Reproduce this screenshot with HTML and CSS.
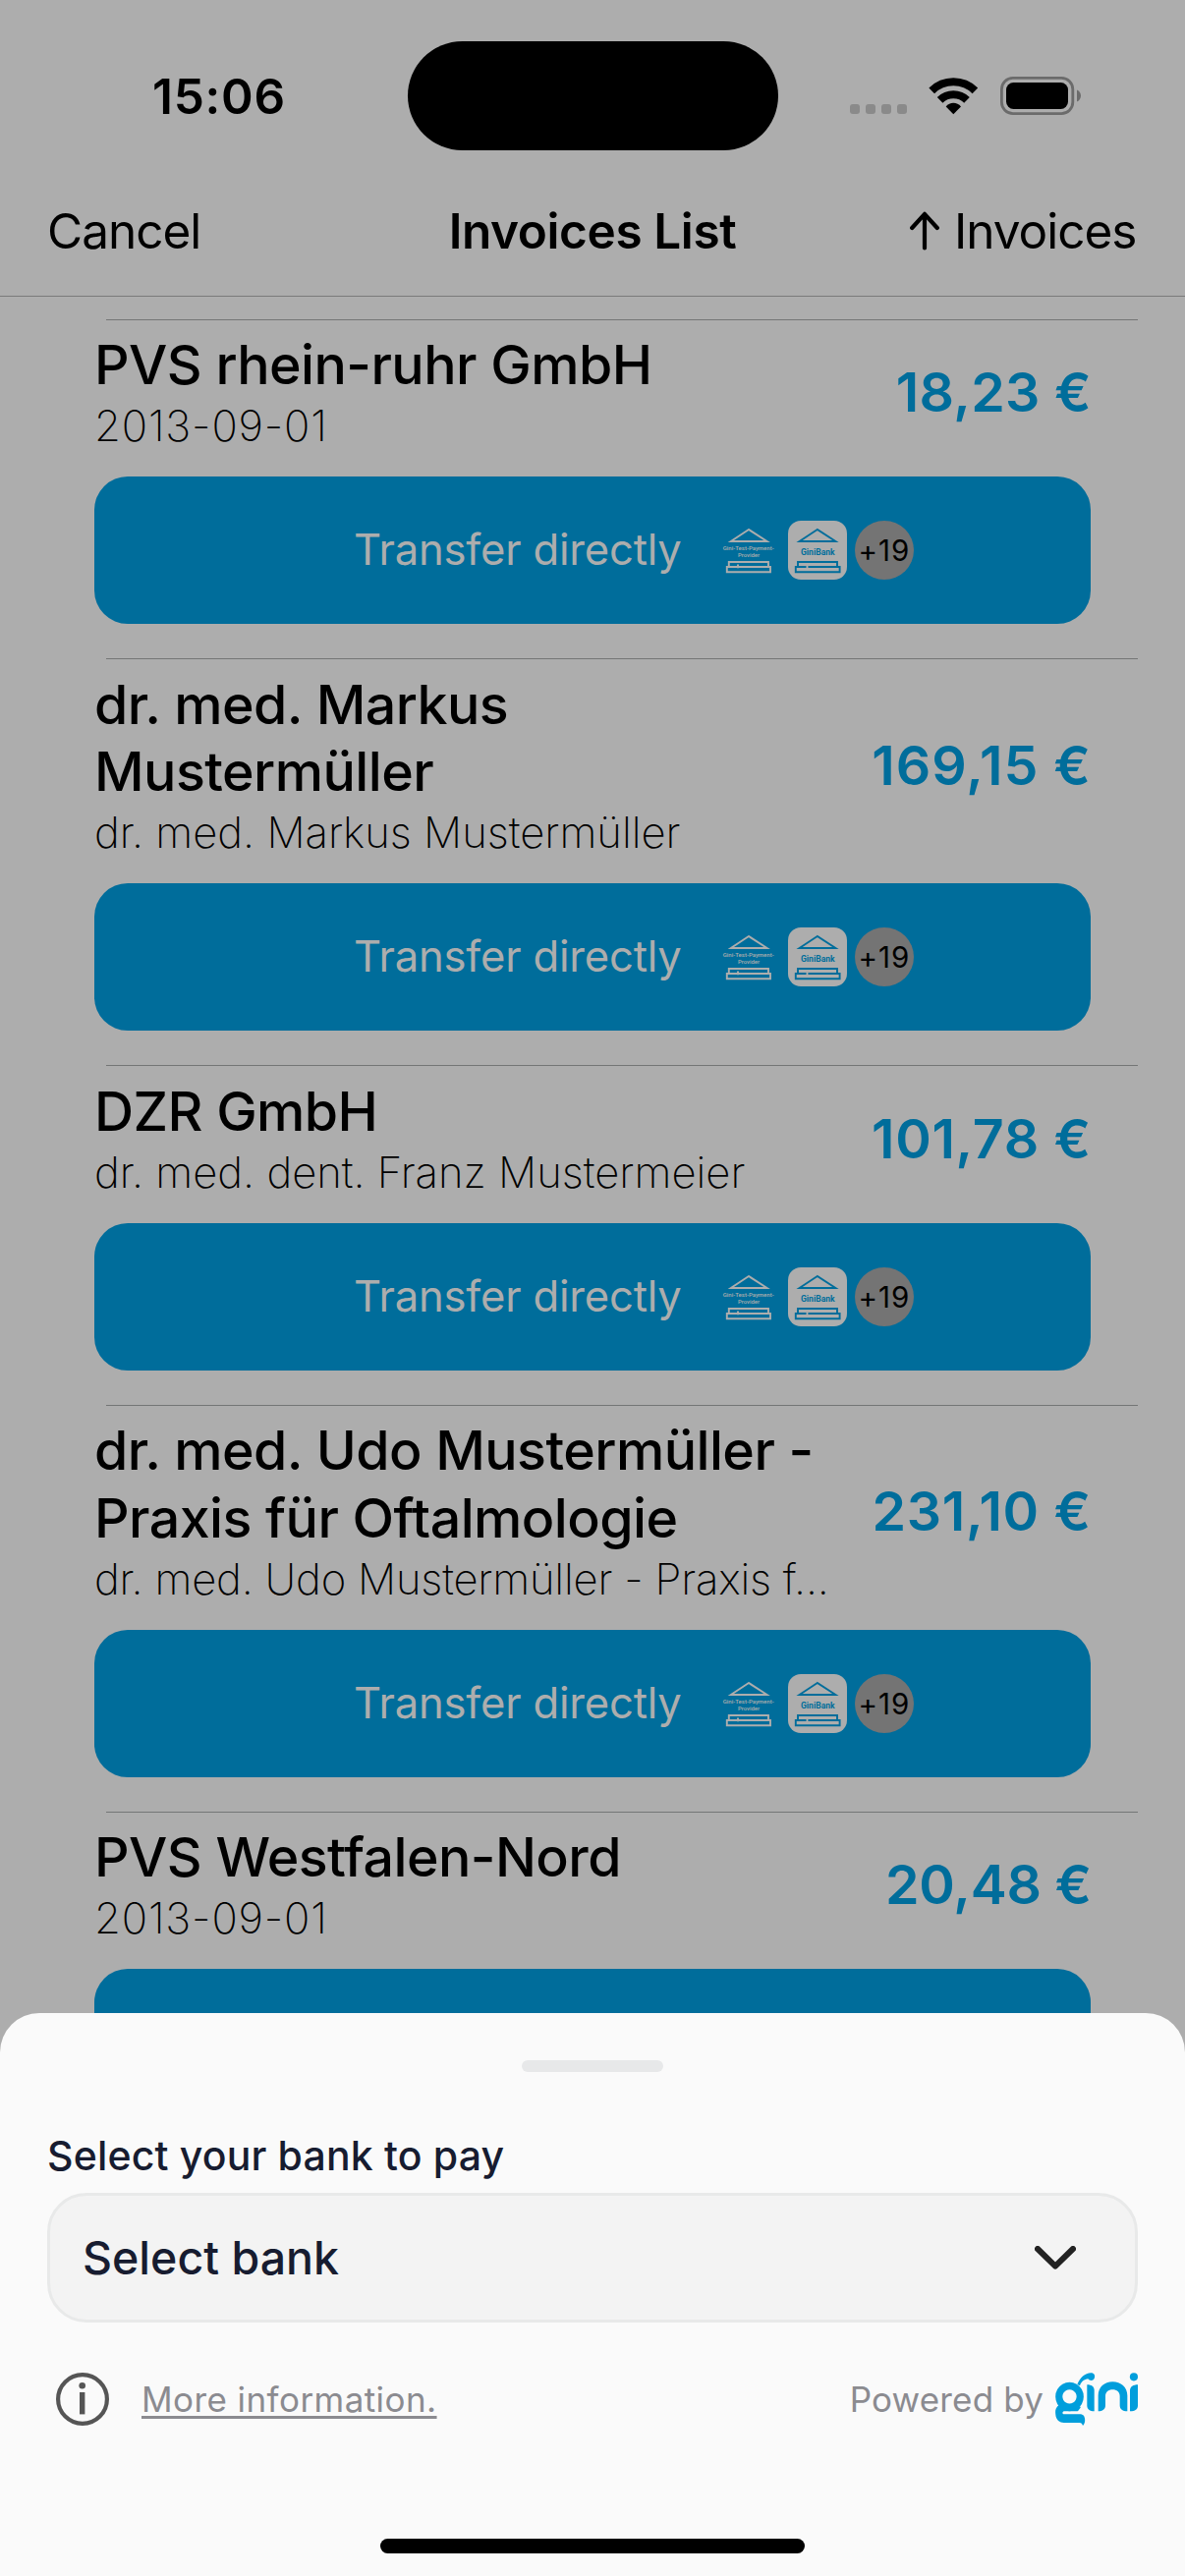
FILE: index.html
```html
<!DOCTYPE html>
<html lang="en">
<head>
<meta charset="utf-8">
<title>Invoices List</title>
<link rel="stylesheet" href="styles.css">
</head>
<body>
<svg class="defs" width="0" height="0" aria-hidden="true">
  <symbol id="bank-test" viewBox="0 0 60 60">
    <g fill="none" stroke="#adadad" stroke-width="1.9">
      <path d="M29 9 10.8 21H47.6Z"/>
      <path d="M8.8 46.4V42H49v4.4"/>
      <path d="M6.8 47h44.200v5.200H6.800Z"/>
      <path d="M18 44.6v3.6"/>
    </g>
    <text x="2.7" y="30" textLength="52" lengthAdjust="spacingAndGlyphs" class="bank-tiny">Gini-Test-Payment-</text>
    <text x="18" y="37.2" textLength="22" lengthAdjust="spacingAndGlyphs" class="bank-tiny">Provider</text>
  </symbol>
  <symbol id="bank-gini" viewBox="0 0 60 60">
    <rect width="60" height="60" rx="13" fill="#adadad"/>
    <g fill="none" stroke="#006d9b" stroke-width="1.9">
      <path d="M29.8 9 11.600 21H48.400Z"/>
      <path d="M10 46.4V42h40v4.4"/>
      <path d="M7.8 47h44.800v5.200H7.800Z"/>
      <path d="M19.5 43.500v5" stroke="#adadad"/>
    </g>
    <text x="13" y="35" textLength="34.6" lengthAdjust="spacingAndGlyphs" class="bank-name">GiniBank</text>
  </symbol>
</svg>

<main class="screen">
  <header class="status">
    <span class="time">15:06</span>
    <span class="island"></span>
    <span class="indicators">
      <svg width="58" height="39" viewBox="0 0 58 39" fill="#8a8a8a"><rect y="28" width="10" height="10" rx="3"/><rect x="16" y="28" width="10" height="10" rx="3"/><rect x="32" y="28" width="10" height="10" rx="3"/><rect x="48" y="28" width="10" height="10" rx="3"/></svg>
      <svg width="51" height="39" viewBox="0 -1 51 39"><g fill="none" stroke="#000" stroke-width="8"><path d="M3.2 13.4A31.5 31.5 0 0 1 47.4 13.4"/><path d="M11.6 22.8A19.5 19.5 0 0 1 39 22.8"/></g><path d="M17.7 29.5C21.5 24.6 29.1 24.6 33 29.5L25.3 37.3Z"/></svg>
      <svg width="83" height="39" viewBox="0 0 83 39"><rect x="1.4" y="1.4" width="72.4" height="36.2" rx="11.5" fill="none" stroke="#6b6b6b" stroke-width="2.8"/><rect x="6" y="6" width="63" height="27" rx="7.5"/><path d="M78 13.5C80.6 14.6 82 17 82 19.5S80.6 24.4 78 25.5Z" fill="#6b6b6b"/></svg>
    </span>
  </header>

  <nav class="nav">
    <span class="nav-left">Cancel</span>
    <span class="nav-title">Invoices List</span>
    <span class="nav-right"><svg width="30" height="40" viewBox="0 0 30 40" fill="none" stroke="#000" stroke-width="4.2" stroke-linecap="round" stroke-linejoin="round"><path d="M15 37.4V3M2.2 17 15 2.8 27.8 17"/></svg><span>Invoices</span></span>
  </nav>

  <section class="list">
    <article class="invoice">
      <div class="info"><div><h2>PVS rhein-ruhr GmbH</h2><p class="date">2013-09-01</p></div><strong>18,23 €</strong></div>
      <div class="pay"><span>Transfer directly</span><svg><use href="#bank-test"/></svg><svg><use href="#bank-gini"/></svg><b>+19</b></div>
    </article>
    <article class="invoice">
      <div class="info"><div><h2>dr. med. Markus<br>Mustermüller</h2><p>dr. med. Markus Mustermüller</p></div><strong class="loose">169,15 €</strong></div>
      <div class="pay"><span>Transfer directly</span><svg><use href="#bank-test"/></svg><svg><use href="#bank-gini"/></svg><b>+19</b></div>
    </article>
    <article class="invoice">
      <div class="info"><div><h2>DZR GmbH</h2><p>dr. med. dent. Franz Mustermeier</p></div><strong class="wide">101,78 €</strong></div>
      <div class="pay"><span>Transfer directly</span><svg><use href="#bank-test"/></svg><svg><use href="#bank-gini"/></svg><b>+19</b></div>
    </article>
    <article class="invoice">
      <div class="info"><div><h2>dr. med. Udo Mustermüller -<br>Praxis für Oftalmologie</h2><p class="clipped">dr. med. Udo Mustermüller - Praxis f...</p></div><strong class="wide">231,10 €</strong></div>
      <div class="pay"><span>Transfer directly</span><svg><use href="#bank-test"/></svg><svg><use href="#bank-gini"/></svg><b>+19</b></div>
    </article>
    <article class="invoice">
      <div class="info"><div><h2>PVS Westfalen-Nord</h2><p class="date">2013-09-01</p></div><strong class="tight">20,48 €</strong></div>
      <div class="pay"></div>
    </article>
  </section>

  <section class="sheet">
    <div class="handle"></div>
    <div class="label">Select your bank to pay</div>
    <div class="select"><span>Select bank</span><svg width="42" height="24" viewBox="0 0 42 24" fill="none" stroke="#222" stroke-width="6" stroke-linecap="round" stroke-linejoin="round"><path d="M3 3 21 20.6 39 3"/></svg></div>
    <footer class="foot">
      <svg width="54" height="54" viewBox="0 0 54 54"><circle cx="27" cy="27" r="24.9" fill="none" stroke="#555" stroke-width="4.2"/><circle cx="26.7" cy="13.2" r="3.3" fill="#555"/><path d="M24 20h5.4v22.4H24Z" fill="#555"/></svg>
      <a class="more">More information.</a>
      <span class="powered">Powered by</span>
      <svg width="84" height="54" viewBox="72 76 252 162" fill="#009edc"><path fill-rule="evenodd" d="M115.5 105a43 44.5 0 1 0 .1 0ZM115.5 127.5a21.5 21.500 0 1 1-.1 0Z"/><path d="M84 174C70 184 72 196 73 205C74 220 86 229 98 229H146C152 229 154 233 156 238C161 233 162.5 228 162.5 221C162.5 209 157 203 147 203H99C93 202 92 197 98 194H140C144 190 147 186 150 180H90Z"/><path d="M139 112C148 92 162 77 181 77C190 77 194 84 192 91C190 101 178 103 172 95C161 96 151 104 147 116Z"/><path d="M169 113C183 113 191 119 191 131V194C177 194 169 188 169 176Z"/><path d="M203 194V146C203 120 222 104 247 104C272 104 292 120 292 146V194C278 194 269 188 269 176V148C269 136 260 128 247 128C234 128 225 136 225 148V176C225 188 216 194 203 194Z"/><path d="M324 113V176C324 188 316 194 300 194V131C300 119 310 113 324 113Z"/><circle cx="311.800" cy="89" r="12.2"/></svg>
    </footer>
    <div class="home"></div>
  </section>
</main>
</body>
</html>
```
FILE: styles.css
```css
* { box-sizing: border-box; }

body {
  margin: 0;
  background: #adadad;
  color: #000;
  font-family: Inter, "Liberation Sans", sans-serif;
}

.defs { position: absolute; }
svg { display: block; flex: none; }

.screen {
  position: relative;
  width: 1206px;
  height: 2622px;
  overflow: hidden;
  display: flex;
  flex-direction: column;
}

/* Status bar */
.status {
  flex: none;
  height: 194px;
  display: grid;
  grid-template-columns: 414.5px 377px 1fr;
  align-items: center;
}
.time {
  padding: 2px 0 0 155px;
  font-size: 49.5px;
  font-weight: 600;
  line-height: 60px;
  letter-spacing: 0.75px;
}
.island { height: 111px; border-radius: 56px; background: #000; }
.indicators { display: flex; padding-left: 73.5px; padding-top: 1px; }
.indicators svg:nth-child(2) { margin: 0 22px; }

/* Navigation bar */
.nav {
  flex: none;
  height: 108px;
  padding: 11px 48px 0;
  display: grid;
  grid-template-columns: 1fr auto 1fr;
  border-bottom: 1px solid #7a7a7a;
  font-size: 49.5px;
  line-height: 60px;
  letter-spacing: -1px;
}
.nav-title { font-weight: 600; letter-spacing: -0.4px; }
.nav-right { display: flex; justify-content: flex-end; gap: 15px; padding-right: 1.5px; }
.nav-right svg { margin-top: 10px; }

/* Invoice list */
.list { flex: 1; min-height: 0; overflow: hidden; padding-top: 23px; }
.invoice { padding: 0 96px 34.9px; }
.invoice::before {
  content: "";
  display: block;
  height: 1px;
  margin: 0 -48px 11.4px 12px;
  background: #747676;
}
.info { display: flex; justify-content: space-between; align-items: center; }
h2 {
  margin: 0;
  font-size: 55.5px;
  font-weight: 500;
  line-height: 68.5px;
  letter-spacing: -0.55px;
}
.info p {
  margin: 1.6px 0 0;
  font-size: 43.6px;
  font-weight: 200;
  line-height: 54px;
  letter-spacing: 0;
}
.info .date { letter-spacing: 0.85px; }
.info .clipped { letter-spacing: -0.2px; }
.info strong {
  margin-right: -1px;
  font-size: 55.5px;
  font-weight: 600;
  line-height: 68px;
  letter-spacing: 0.3px;
  color: #006d9b;
}
.info strong.loose { letter-spacing: 1px; }
.info strong.wide { letter-spacing: 0.7px; }
.info strong.tight { letter-spacing: -0.2px; }
.pay {
  margin-top: 24px;
  height: 150px;
  padding-left: 264px;
  display: flex;
  align-items: center;
  gap: 8.5px;
  border-radius: 34px;
  background: #006d9b;
  color: #adadad;
}
.pay span { width: 364.5px; font-size: 43.6px; letter-spacing: -0.2px; padding-bottom: 1px; }
.pay svg { width: 60px; height: 60px; }
.pay b {
  width: 60px;
  height: 60px;
  border-radius: 50%;
  background: #747474;
  color: #000;
  font-size: 29.5px;
  font-weight: 400;
  line-height: 60px;
  letter-spacing: 1px;
  text-align: center;
}
.bank-tiny { font: 500 6px Roboto, sans-serif; fill: #adadad; }
.bank-name { font: 700 8.6px Roboto, sans-serif; fill: #006d9b; }

/* Bottom sheet, laid over the list */
.sheet {
  position: absolute;
  left: 0;
  right: 0;
  bottom: 0;
  height: 573px;
  padding: 48px 48px 0;
  border-radius: 40px 40px 0 0;
  background: #fafafa;
  color: #171c30;
}
.handle { width: 144px; height: 12px; margin: 0 auto 60px; border-radius: 6px; background: #e7e8e9; }
.label { font-size: 41px; font-weight: 500; line-height: 50px; letter-spacing: 0.17px; }
.select {
  height: 132px;
  margin-top: 13px;
  padding: 0 60px 0 33px;
  display: flex;
  align-items: center;
  justify-content: space-between;
  border: 3px solid #e8e9e9;
  border-radius: 40px;
  background: #f3f3f3;
  font-size: 46.5px;
  font-weight: 500;
  line-height: 56px;
}
.foot {
  margin-top: 51px;
  padding-left: 9px;
  height: 54px;
  display: flex;
  align-items: center;
  color: #8b8b90;
  font-size: 35px;
  line-height: 42px;
}
.more {
  margin-left: 33px;
  letter-spacing: 0.43px;
  text-decoration: underline;
  text-decoration-thickness: 3px;
  text-decoration-skip-ink: none;
  text-underline-offset: 4px;
}
.powered { margin-left: auto; margin-right: 12px; letter-spacing: 0.17px; }
.home { width: 432px; height: 15px; margin: 115px auto 0; border-radius: 8px; background: #000; }
```
